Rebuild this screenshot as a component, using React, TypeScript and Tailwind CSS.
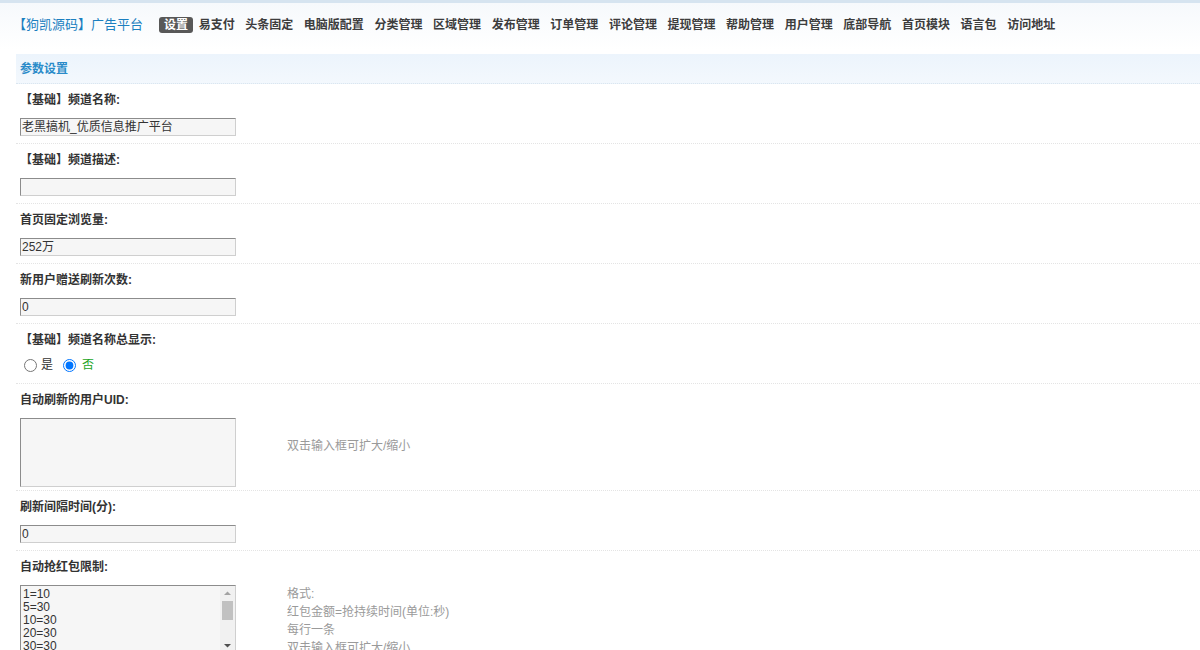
import { ReactNode } from "react";

const nav = [
  "设置",
  "易支付",
  "头条固定",
  "电脑版配置",
  "分类管理",
  "区域管理",
  "发布管理",
  "订单管理",
  "评论管理",
  "提现管理",
  "帮助管理",
  "用户管理",
  "底部导航",
  "首页模块",
  "语言包",
  "访问地址",
];

const redLimits = ["1=10", "5=30", "10=30", "20=30", "30=30", "50=60", "100=60", "200=90", "500=120", "1000=180", "2000=300"].join("\n");

const boxBorder =
  "bg-[#f6f6f6] border border-t-[#8c8c8c] border-l-[#8c8c8c] border-r-[#cfcfcf] border-b-[#cfcfcf]";

const inputCls = `block w-[216px] h-[18px] px-[1px] py-0 text-[12px] leading-normal text-[#333] outline-none ${boxBorder}`;

function Row({ label, children, pb = "pb-[7px]" }: { label: string; children: ReactNode; pb?: string }) {
  return (
    <div className={`px-[4px] pt-[6px] ${pb} border-b border-dotted border-[#e4e4e4]`}>
      <div className="h-[20px] leading-[20px] font-bold text-[#333]">{label}</div>
      <div className="mt-[8px]">{children}</div>
    </div>
  );
}

function Scrollbar() {
  return (
    <div className="w-[15px] h-full bg-[#f1f1f1] flex flex-col items-center shrink-0">
      <svg width="15" height="14" viewBox="0 0 15 14" className="shrink-0">
        <path d="M4 9 L7.5 5.5 L11 9 Z" fill="#a3a3a3" />
      </svg>
      <div className="w-[11px] h-[19px] bg-[#c1c1c1] mt-[1px]" />
      <div className="flex-1" />
      <svg width="15" height="14" viewBox="0 0 15 14" className="shrink-0">
        <path d="M4 5 L7.5 8.5 L11 5 Z" fill="#505050" />
      </svg>
    </div>
  );
}

export default function App() {
  return (
    <div
      className="min-h-screen bg-white text-[12px] text-[#333]"
      style={{ fontFamily: '"Liberation Sans", "Noto Sans CJK SC", sans-serif' }}
    >
      <header className="h-[50px] border-t-[3px] border-[#d6e4f0] bg-gradient-to-b from-[#f6f9fc] to-white flex items-center pl-[13px]">
        <div className="text-[13px] leading-[16px] text-[#1b7fc0] mt-[-3px]">【狗凯源码】广告平台</div>
        <nav className="flex items-center gap-[0.6px] ml-[16px] mt-[-3px]">
          {nav.map((n, i) => (
            <a
              key={n}
              className={
                i === 0
                  ? "px-[5px] h-[16px] leading-[16px] rounded-[3px] bg-[#585858] text-white font-bold"
                  : "px-[5px] h-[16px] leading-[16px] text-[#3d3d3d] font-bold"
              }
            >
              {n}
            </a>
          ))}
        </nav>
      </header>

      <main className="pl-[16px] mt-[4px]">
        <div className="h-[30px] leading-[30px] pl-[4px] bg-gradient-to-b from-[#ecf4fc] to-[#f3f8fd] border-b border-dotted border-[#dbe6ef] font-bold text-[#2a8bc9]">
          参数设置
        </div>

        <Row label="【基础】频道名称:">
          <input className={inputCls} defaultValue="老黑搞机_优质信息推广平台" />
        </Row>
        <Row label="【基础】频道描述:">
          <input className={inputCls} defaultValue="" />
        </Row>
        <Row label="首页固定浏览量:">
          <input className={inputCls} defaultValue="252万" />
        </Row>
        <Row label="新用户赠送刷新次数:">
          <input className={inputCls} defaultValue="0" />
        </Row>
        <Row label="【基础】频道名称总显示:" pb="pb-[11px]">
          <div className="flex items-center h-[14px]">
            <label className="flex items-center mr-[6px]">
              <input type="radio" name="show" className="w-[13px] h-[13px] ml-[4px] mr-[3px]" />
              <span className="ml-[1px]">是</span>
            </label>
            <label className="flex items-center">
              <input type="radio" name="show" defaultChecked className="w-[13px] h-[13px] ml-[4px] mr-[3px]" />
              <span className="ml-[3px] text-[#24a524]">否</span>
            </label>
          </div>
        </Row>
        <Row label="自动刷新的用户UID:" pb="pb-[3px]">
          <div className="flex items-start">
            <textarea
              className={`block w-[216px] h-[69px] px-[2px] py-[1px] resize-none text-[12px] leading-[13px] outline-none ${boxBorder}`}
              defaultValue=""
            />
            <div className="ml-[51px] mt-[21px] leading-[14px] text-[#9a9a9a]">双击输入框可扩大/缩小</div>
          </div>
        </Row>
        <Row label="刷新间隔时间(分):">
          <input className={inputCls} defaultValue="0" />
        </Row>
        <Row label="自动抢红包限制:">
          <div className="flex items-start">
            <div className={`flex w-[216px] h-[69px] ${boxBorder}`}>
              <textarea
                className="block flex-1 min-w-0 h-full px-[2px] pt-[2px] pb-0 resize-none overflow-hidden text-[12px] leading-[13px] text-[#333] bg-transparent outline-none"
                defaultValue={redLimits}
              />
              <Scrollbar />
            </div>
            <div className="ml-[51px] leading-[18px] text-[#9a9a9a]">
              <div>格式:</div>
              <div>红包金额=抢持续时间(单位:秒)</div>
              <div>每行一条</div>
              <div>双击输入框可扩大/缩小</div>
            </div>
          </div>
        </Row>
      </main>
    </div>
  );
}
